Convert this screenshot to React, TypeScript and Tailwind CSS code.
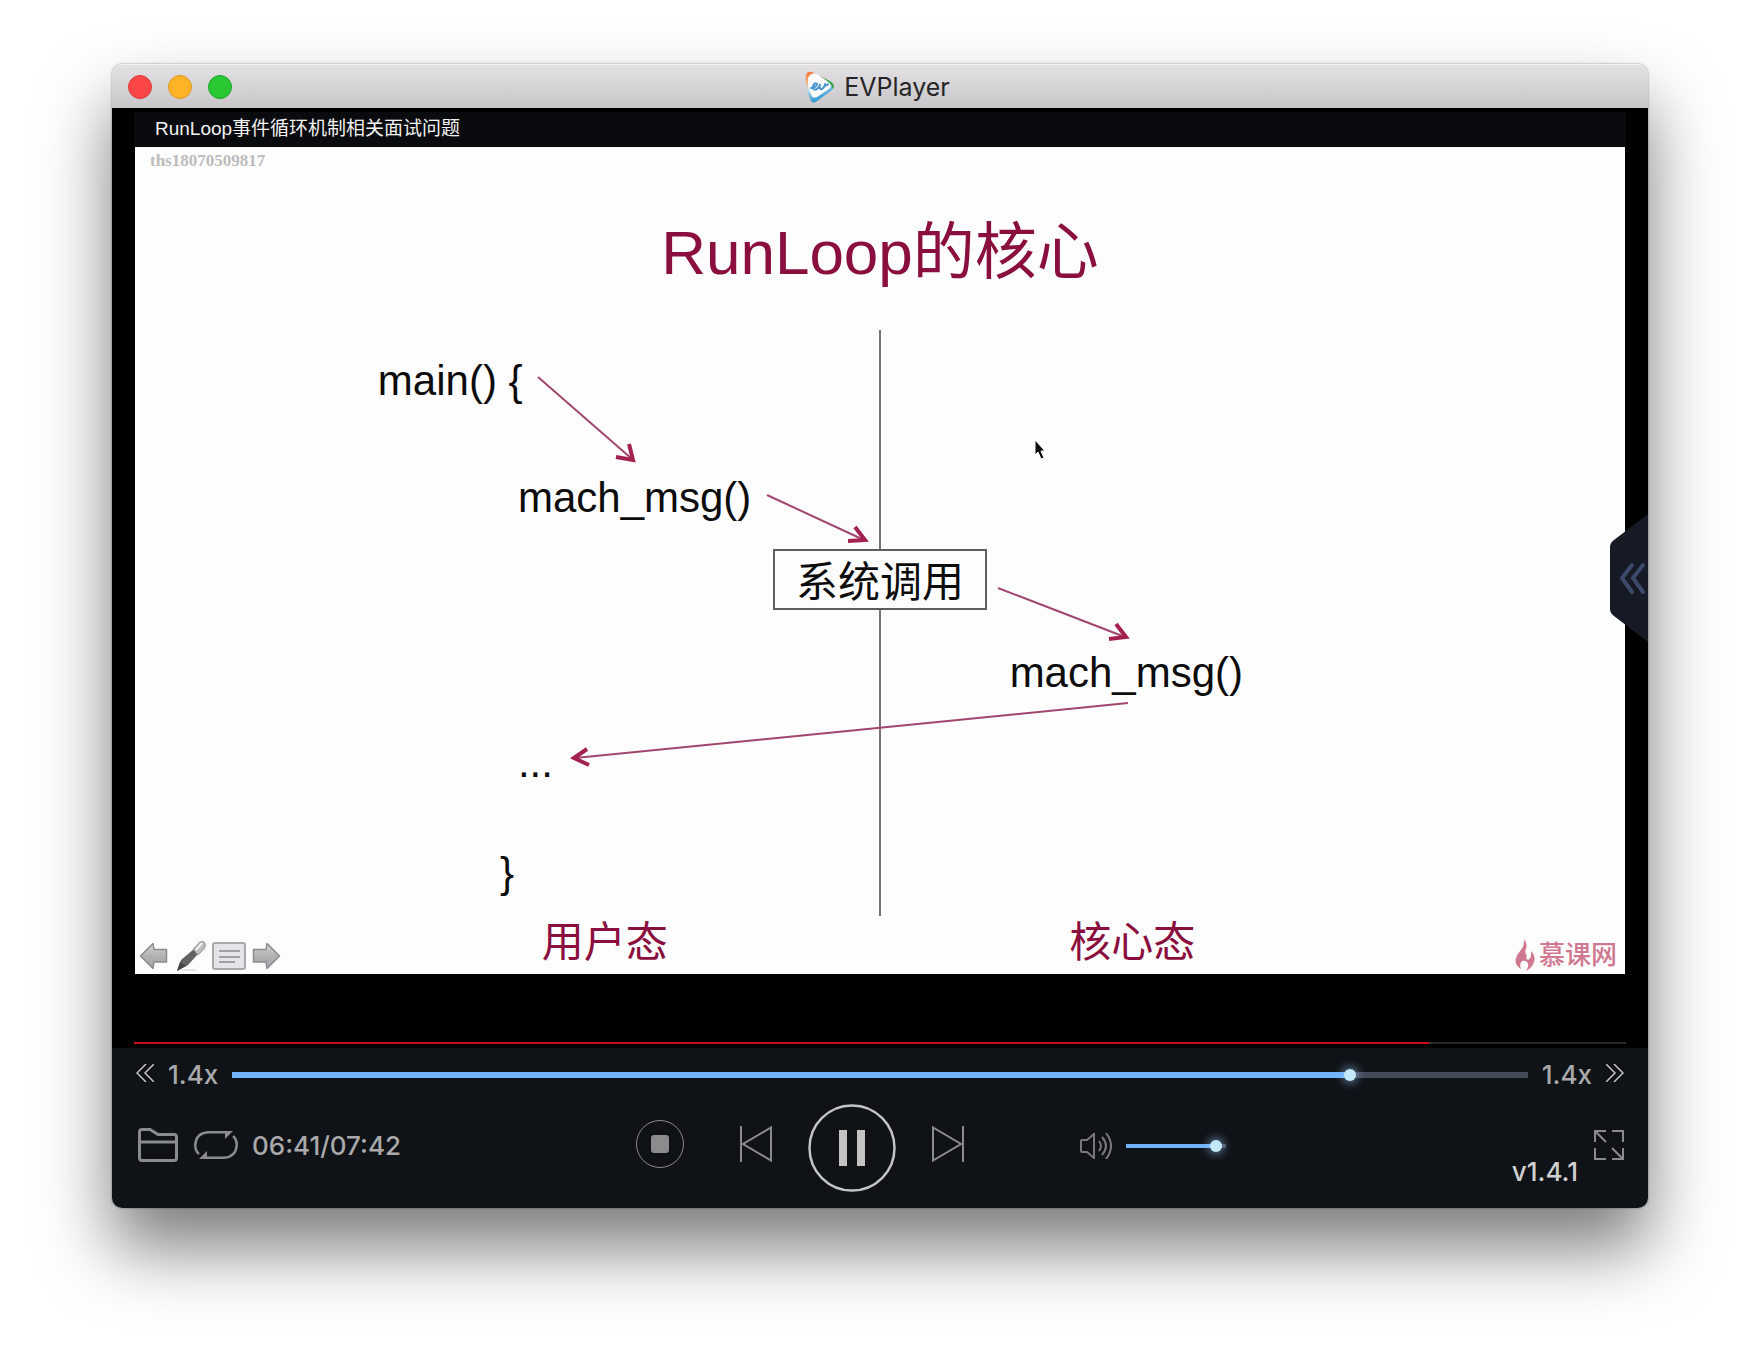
import { useState } from "react";
import type { ReactNode } from "react";

const SLIDER =
  "cursor-pointer appearance-none bg-[#434959] outline-none [&::-webkit-slider-thumb]:size-3 [&::-webkit-slider-thumb]:appearance-none [&::-webkit-slider-thumb]:rounded-full [&::-webkit-slider-thumb]:bg-[#c3e8f7] [&::-webkit-slider-thumb]:shadow-[0_0_10px_2px_rgba(160,210,255,0.55)]";

type SliderProps = {
  label: string;
  max: number;
  value: number;
  onChange: (value: number) => void;
  className: string;
};

function Slider({ label, max, value, onChange, className }: SliderProps) {
  const percent = (value / max) * 100;
  return (
    <input
      type="range"
      aria-label={label}
      min={0}
      max={max}
      value={value}
      onChange={(e) => onChange(Number(e.target.value))}
      className={`${SLIDER} ${className}`}
      style={{ backgroundImage: `linear-gradient(to right, #70b2fb ${percent}%, transparent ${percent}%)` }}
    />
  );
}

function IconButton({ label, className = "", children }: { label: string; className?: string; children: ReactNode }) {
  return (
    <button type="button" aria-label={label} className={`shrink-0 cursor-pointer ${className}`}>
      {children}
    </button>
  );
}

function PlayerLogo() {
  return (
    <svg viewBox="0 0 32 34" className="h-[34px] w-8" aria-hidden="true">
      <defs>
        <linearGradient id="rim" x1="0" y1="0" x2="0.35" y2="1">
          <stop offset="0" stopColor="#f4743b" />
          <stop offset="0.3" stopColor="#f7a66f" />
          <stop offset="0.55" stopColor="#b9e0ee" />
          <stop offset="1" stopColor="#1d8fd0" />
        </linearGradient>
      </defs>
      <path d="M2 5Q3 1 8 2L26 11Q32 15 28 20L13 31Q8 35 6 29Q1 17 2 5Z" fill="url(#rim)" />
      <path d="M14 5L26 11Q32 15 29 19Q27 12 14 5Z" fill="#39a54a" />
      <path d="M4 8Q7 2 13 4L24 12Q29 15 25 19L13 27Q8 29 7 24Q3 17 4 8Z" fill="#fbfcfe" />
      <path
        d="M7 18Q13 17 13 14Q11 12 9 16Q8 21 13 19Q16 17 16 14Q15 20 18 19Q21 17 21 14M21 14Q22 17 24 14"
        fill="none"
        stroke="#4a97cf"
        strokeWidth="2"
        strokeLinecap="round"
      />
    </svg>
  );
}

function TitleBar() {
  return (
    <header className="relative flex h-11 items-center justify-center border-t border-[#f4f3f4] bg-linear-to-b from-[#e4e1e4] to-[#c8c6c9]">
      <div className="absolute left-4 flex gap-4">
        <IconButton label="Close" className="size-6 rounded-full border border-[#dd3a3d] bg-[#fc4648]">{null}</IconButton>
        <IconButton label="Minimize" className="size-6 rounded-full border border-[#dd9a20] bg-[#fdb327]">{null}</IconButton>
        <IconButton label="Zoom" className="size-6 rounded-full border border-[#1ea42c] bg-[#29c732]">{null}</IconButton>
      </div>
      <div className="flex items-center gap-2 pr-[6px]">
        <PlayerLogo />
        <h1 className="text-[25px] leading-8 text-[#262527]">EVPlayer</h1>
      </div>
    </header>
  );
}

function DiagramLines() {
  return (
    <svg viewBox="0 0 1490 827" className="absolute inset-0 size-full" fill="none" aria-hidden="true">
      <path d="M745 183V769" stroke="#77717a" strokeWidth="2" />
      <g stroke="#a0466f" strokeWidth="2">
        <path d="M403 230L497 312" />
        <path d="M632 348L729 393" />
        <path d="M863 441L990 490" />
        <path d="M993 556L440 611" />
      </g>
      <g stroke="#a4204f" strokeWidth="4">
        <path d="M494 297L498 313L481 310" />
        <path d="M720 380L730 393L713 394" />
        <path d="M981 477L991 490L974 492" />
        <path d="M452 602L439 611L454 618" />
      </g>
      <path
        d="M900 293V308L903 305L906 312L909 311L906 304H910Z"
        fill="#0b0b0b"
        stroke="#ffffff"
        strokeWidth="1"
      />
    </svg>
  );
}

function SlideTools() {
  return (
    <div className="absolute bottom-[2px] left-1 flex h-8 items-center gap-[6px]">
      <svg width="0" height="0" className="absolute" aria-hidden="true">
        <defs>
          <linearGradient id="steel" x1="0" y1="0" x2="0" y2="1">
            <stop offset="0" stopColor="#d4d4d6" />
            <stop offset="0.5" stopColor="#b2b2b5" />
            <stop offset="1" stopColor="#a3a3a7" />
          </linearGradient>
        </defs>
      </svg>
      <IconButton label="Previous slide">
        <svg viewBox="0 0 29 28" className="h-7 w-[29px]">
          <path
            d="M1.500 14L14 1.500L15 7.500H27.500V20H15L14 26.500Z"
            fill="url(#steel)"
            stroke="#8b8b8f"
            strokeWidth="1.500"
            strokeLinejoin="round"
          />
        </svg>
      </IconButton>
      <IconButton label="Pen">
        <svg viewBox="-3 0 32 32" className="size-8">
          <ellipse cx="12" cy="30" rx="8" ry="1" fill="#e2e2e2" />
          <path d="M0 31L4 20L17 9L22 13L11 25Z" fill="#636365" />
          <path d="M0 31L3 22L9 26Z" fill="#444446" />
          <path d="M16 9L23 2Q26 0 28 3Q29 6 27 9L21 15Z" fill="#bdbdc0" stroke="#98989b" />
          <path d="M19 10L25 3" stroke="#f1f1f3" strokeWidth="2" />
        </svg>
      </IconButton>
      <IconButton label="Slide menu">
        <svg viewBox="0 0 34 28" className="h-7 w-[34px]">
          <rect x="1" y="1" width="32" height="26" rx="2" fill="#e6e3e8" stroke="#a9a7ac" strokeWidth="2" />
          <path d="M7 9H28M7 15H28M7 20H23" stroke="#a19fa5" strokeWidth="2" />
        </svg>
      </IconButton>
      <IconButton label="Next slide">
        <svg viewBox="0 0 29 28" className="h-7 w-[29px]">
          <path
            d="M27.500 14L15 1.500L14 7.500H1.500V20H14L15 26.500Z"
            fill="url(#steel)"
            stroke="#8b8b8f"
            strokeWidth="1.500"
            strokeLinejoin="round"
          />
        </svg>
      </IconButton>
    </div>
  );
}

function Brand() {
  return (
    <div className="absolute right-2 bottom-[3px] flex items-center gap-1 text-[#cf7890]">
      <svg viewBox="0 0 20 32" className="h-8 w-5" fill="currentColor" aria-hidden="true">
        <path d="M9 0Q13 5 11 10Q9 13 12 17Q10 19 13 21Q17 19 16 12Q21 17 19 23Q17 29 11 32Q15 26 12 23Q10 21 7 22Q4 25 6 30Q-1 26 1 19Q2 15 6 11Q10 6 9 0Z" />
      </svg>
      <span className="text-[26px] leading-8 font-medium">慕课网</span>
    </div>
  );
}

function Slide() {
  return (
    <section
      aria-label="RunLoop的核心"
      className="relative mx-px aspect-[1490/827] bg-[#fdfdfd] font-['Liberation_Sans','Noto_Sans_CJK_SC',sans-serif] text-[42px] leading-none text-[#0c0c0c]"
    >
      <h2 className="pt-[75px] text-center text-[62px] leading-none font-normal text-[#8b0f3e]">RunLoop的核心</h2>
      <DiagramLines />
      <p className="absolute top-[4px] left-[15px] font-['Liberation_Serif',serif] text-[17px] leading-5 font-bold text-[#bcbcbc]">
        ths18070509817
      </p>
      <p className="absolute top-[25.7%] left-[16.3%]">main() &#123;</p>
      <p className="absolute top-[39.9%] left-[25.7%]">mach_msg()</p>
      <p className="absolute top-[48.6%] left-1/2 flex h-[61px] w-[214px] -translate-x-1/2 items-center justify-center border-2 border-[#5f5c60] bg-[#fdfdfd] pt-[8px]">
        系统调用
      </p>
      <p className="absolute top-[61.1%] left-[58.7%]">mach_msg()</p>
      <p className="absolute top-[71.9%] left-[25.7%]">...</p>
      <p className="absolute top-[85.3%] left-[24.5%]">&#125;</p>
      <p className="absolute top-[93.7%] left-[27.3%] text-[#8b0f3e]">用户态</p>
      <p className="absolute top-[93.7%] left-[62.7%] text-[#8b0f3e]">核心态</p>
      <SlideTools />
      <Brand />
    </section>
  );
}

function VideoArea() {
  return (
    <main className="relative bg-black px-[22px] pt-1 pb-1">
      <div className="h-[35px] bg-[#0a0b0e] px-[21px] font-['Liberation_Sans','Noto_Sans_CJK_SC',sans-serif] text-[19px] leading-[34px] text-[#f2f2f2]">
        RunLoop事件循环机制相关面试问题
      </div>
      <Slide />
      <div className="mt-[68px] h-[2px] bg-[#29282d]">
        <div className="h-full w-[86.8%] bg-[#cc0a10]" />
      </div>
      <IconButton label="Show playlist" className="absolute top-[43.1%] right-0">
        <svg viewBox="0 0 38 130" className="h-[130px] w-[38px]" fill="none">
          <path d="M38 1L4 27Q0 30 0 34V96Q0 100 4 103L38 129Z" fill="#151a24" />
          <path d="M22 52L12 65L22 79M33 52L23 65L33 79" stroke="#3b496b" strokeWidth="4" strokeLinecap="round" />
        </svg>
      </IconButton>
    </main>
  );
}

function Controls() {
  const [position, setPosition] = useState(401);
  const [volume, setVolume] = useState(96);
  return (
    <footer className="bg-[#0f1217] px-6 pb-4 text-[26px] leading-8 font-medium text-[#a9a9ab]">
      <div className="flex h-12 items-center pt-[6px]">
        <IconButton label="Slower" className="-mt-1">
          <svg viewBox="0 0 18 18" className="size-[18px]" fill="none" stroke="#c4c4c6" strokeWidth="1.500">
            <path d="M10 0L1 9L10 18M18 0L9 9L18 18" />
          </svg>
        </IconButton>
        <span className="ml-[14px]">1.4x</span>
        <Slider
          label="Playback position"
          max={463}
          value={position}
          onChange={setPosition}
          className="mx-[14px] h-[6px] min-w-0 flex-1"
        />
        <span className="mr-[14px]">1.4x</span>
        <IconButton label="Faster" className="-mt-1">
          <svg viewBox="0 0 18 18" className="size-[18px]" fill="none" stroke="#c4c4c6" strokeWidth="1.500">
            <path d="M0 0L9 9L0 18M8 0L17 9L8 18" />
          </svg>
        </IconButton>
      </div>

      <div className="grid grid-cols-[500fr_590px_398fr] items-center">
        <div className="flex items-center pt-[2px] pl-[2px]">
          <IconButton label="Open file">
            <svg viewBox="0 0 40 34" className="h-[34px] w-10" fill="none" stroke="#8b8b8d" strokeWidth="3">
              <path d="M4 1.500H12L20 6.500H36Q38.500 6.500 38.500 9V30Q38.500 32.500 36 32.500H4Q1.500 32.500 1.500 30V4Q1.500 1.500 4 1.500ZM1.500 14H38.500" />
            </svg>
          </IconButton>
          <IconButton label="Repeat" className="ml-4">
            <svg viewBox="0 0 44 28" className="h-7 w-11" fill="none" stroke="#8b8b8d" strokeWidth="2.500">
              <path d="M5 23Q1.250 20 1.250 14Q2 2 14 1.250H34M39 5Q42.750 8 42.750 14Q42 26 30 26.750H10" />
              <path d="M31 0H39L31 8ZM13 28H5L13 20Z" fill="#8b8b8d" stroke="none" />
            </svg>
          </IconButton>
          <span className="ml-[14px] pt-[2px] whitespace-nowrap">06:41/07:42</span>
        </div>

        <div className="flex items-center">
          <IconButton label="Stop">
            <svg viewBox="0 0 48 48" className="size-12">
              <circle cx="24" cy="24" r="23.500" fill="none" stroke="#8b8b8d" />
              <rect x="15" y="15" width="18" height="18" rx="3" fill="#8b8b8d" />
            </svg>
          </IconButton>
          <IconButton label="Previous" className="ml-14">
            <svg viewBox="0 0 32 36" className="h-9 w-8" fill="none" stroke="#8b8b8d" strokeWidth="2">
              <path d="M1 0V36M31 1.500V34.500L3 18Z" />
            </svg>
          </IconButton>
          <IconButton label="Pause" className="mt-2 ml-9">
            <svg viewBox="0 0 88 88" className="size-[88px]">
              <circle cx="44" cy="44" r="42.500" fill="none" stroke="#c4c4c4" strokeWidth="2.500" />
              <path d="M31 26H39V62H31ZM49 26H57V62H49Z" fill="#c4c4c4" />
            </svg>
          </IconButton>
          <IconButton label="Next" className="ml-9">
            <svg viewBox="0 0 32 36" className="h-9 w-8" fill="none" stroke="#8b8b8d" strokeWidth="2">
              <path d="M31 0V36M1 1.500V34.500L29 18Z" />
            </svg>
          </IconButton>
          <div className="ml-auto flex items-center gap-[14px] pt-[3px]">
            <IconButton label="Mute">
              <svg viewBox="0 0 32 26" className="h-[26px] w-8" fill="none" stroke="#77787b" strokeWidth="2">
                <path d="M2 7H7L14 1V25L7 19H2Q1 19 1 18V8Q1 7 2 7Z" />
                <path d="M19 8Q23 13 19 18M22 4Q30 13 22 22M26 0Q36 13 26 26" />
              </svg>
            </IconButton>
            <Slider label="Volume" max={100} value={volume} onChange={setVolume} className="h-1 w-[100px]" />
          </div>
        </div>

        <div className="flex items-center justify-end pt-[2px]">
          <span className="mt-[54px] mr-4 text-[#cfcfd0]">v1.4.1</span>
          <IconButton label="Full screen">
            <svg viewBox="0 0 30 30" className="size-[30px]" fill="none" stroke="#8b8b8d" strokeWidth="2">
              <path d="M1 12V1H12M18 1H29V12M29 18V29H18M12 29H1V18M1 1L12 12M29 29L18 18" />
            </svg>
          </IconButton>
        </div>
      </div>
    </footer>
  );
}

export default function App() {
  return (
    <div className="min-h-screen bg-white px-28 pt-16 pb-40 font-[Inter,'Noto_Sans_CJK_SC',sans-serif]">
      <div className="overflow-hidden rounded-[10px] shadow-[0_0_2px_rgba(0,0,0,0.5),0_40px_70px_rgba(0,0,0,0.52)]">
        <TitleBar />
        <VideoArea />
        <Controls />
      </div>
    </div>
  );
}
